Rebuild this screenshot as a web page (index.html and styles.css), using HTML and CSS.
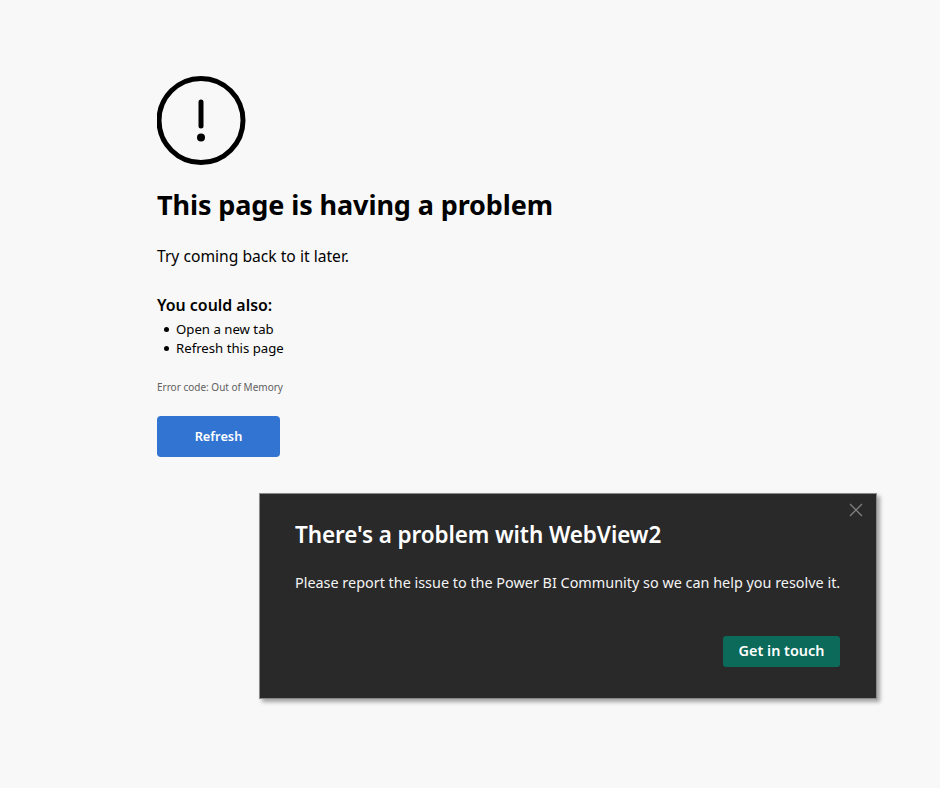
FILE: index.html
```html
<!DOCTYPE html>
<html lang="en">
<head>
<meta charset="utf-8">
<title>This page is having a problem</title>
<link rel="stylesheet" href="styles.css">
</head>
<body>
<main class="error-page">
  <svg class="error-icon" width="90" height="90" viewBox="1 0 90 90" aria-hidden="true">
    <circle cx="45" cy="44.5" r="42" fill="none" stroke="#000" stroke-width="5"/>
    <path d="M45 26V50" fill="none" stroke="#000" stroke-width="5" stroke-linecap="round"/>
    <circle cx="45" cy="61.5" r="4" fill="#000"/>
  </svg>
  <h1 class="error-title">This page is having a problem</h1>
  <p class="error-text">Try coming back to it later.</p>
  <h2 class="also-title">You could also:</h2>
  <ul class="also-list">
    <li>Open a new tab</li>
    <li>Refresh this page</li>
  </ul>
  <p class="error-code">Error code: Out of Memory</p>
  <button class="refresh-btn" type="button">Refresh</button>
</main>
<aside class="toast">
  <svg class="toast-close" width="14" height="14" viewBox="0 0 14 14" aria-hidden="true">
    <path d="M1 1L13 13M13 1L1 13" fill="none" stroke="#7d7d7d" stroke-width="1.4"/>
  </svg>
  <h2 class="toast-title">There's a problem with WebView2</h2>
  <p class="toast-text">Please report the issue to the Power BI Community so we can help you resolve it.</p>
  <div class="toast-actions">
    <button class="touch-btn" type="button">Get in touch</button>
  </div>
</aside>
</body>
</html>
```

FILE: styles.css
```css
* { box-sizing: border-box; }
html, body { height: 100%; }
body {
  margin: 0;
  background: #f8f8f8;
  color: #000;
  font-family: "Noto Sans", "Open Sans", sans-serif;
  overflow: hidden;
  position: relative;
}
.error-page {
  padding: 76px 0 0 157px;
  display: flex;
  flex-direction: column;
  align-items: flex-start;
}
.error-icon { display: block; }
.error-title {
  margin: 20px 0 0;
  font-size: 27px;
  line-height: 38px;
  font-weight: 700;
  letter-spacing: -.1px;
}
.error-text {
  margin: 21px 0 0;
  font-size: 15.65px;
  line-height: 22px;
}
.also-title {
  margin: 27px 0 0;
  font-size: 15.9px;
  line-height: 22px;
  font-weight: 600;
}
.also-list {
  margin: 4px 0 0;
  padding: 0 0 0 7px;
  list-style: none;
  font-size: 13.2px;
  line-height: 19px;
}
.also-list li {
  display: flex;
  align-items: center;
  gap: 7px;
}
.also-list li::before {
  content: "";
  width: 5px;
  height: 5px;
  border-radius: 50%;
  background: #000;
}
.error-code {
  margin: 22px 0 0;
  font-size: 10px;
  line-height: 14px;
  color: #616161;
}
.refresh-btn {
  margin-top: 22px;
  width: 123px;
  height: 41px;
  padding: 0 0 2px;
  border: 0;
  border-radius: 4px;
  background: #3174d2;
  color: #fff;
  font: 600 12.8px "Noto Sans", sans-serif;
}
.toast {
  position: absolute;
  left: 259px;
  top: 493px;
  width: 618px;
  height: 206px;
  padding: 24px 20px 0 35px;
  background: #292929;
  border: 1px solid #8a8a8a;
  box-shadow: 3px 3px 4px rgba(0, 0, 0, .35);
  color: #fff;
  display: flex;
  flex-direction: column;
}
.toast-close { position: absolute; top: 9px; right: 13px; }
.toast-title {
  margin: 0;
  font-size: 22.5px;
  line-height: 34px;
  font-weight: 600;
  letter-spacing: -.1px;
}
.toast-text {
  margin: 21px 0 0;
  font-size: 14.4px;
  line-height: 20px;
  color: #f4f4f4;
}
.toast-actions {
  margin: 43px 16px 0 0;
  display: flex;
  justify-content: flex-end;
}
.touch-btn {
  width: 117px;
  height: 31px;
  padding: 0 0 2px;
  border: 0;
  border-radius: 3px;
  background: #0b6a5a;
  color: #fff;
  font: 600 14.4px "Noto Sans", sans-serif;
}
```
